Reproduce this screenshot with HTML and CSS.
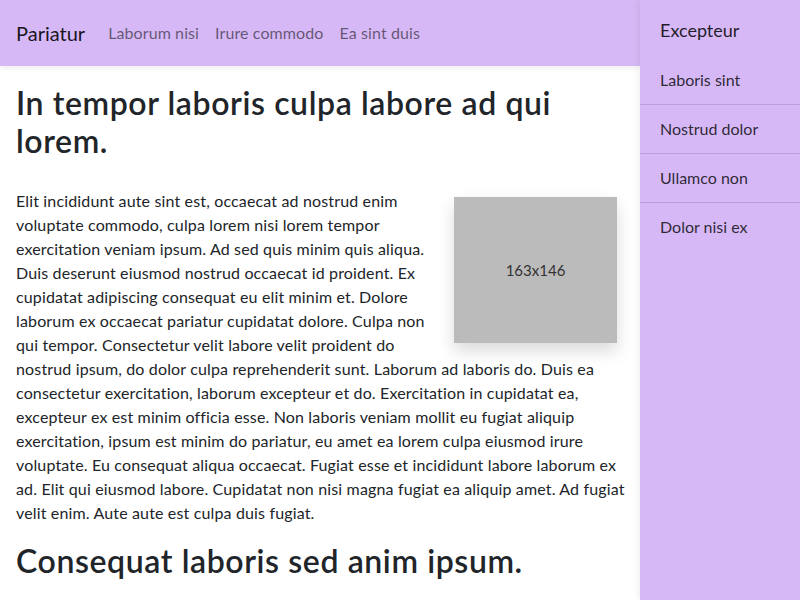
FILE: index.html
```html
<!DOCTYPE html>
<html>
<head>
<meta charset="utf-8">
<link rel="stylesheet" href="styles.css">
</head>
<body>
<div class="layout">
  <div class="main">
    <nav class="navbar">
      <span class="brand">Pariatur</span>
      <a class="nav-link">Laborum nisi</a>
      <a class="nav-link">Irure commodo</a>
      <a class="nav-link">Ea sint duis</a>
    </nav>
    <div class="content">
      <h1 class="title">In tempor laboris culpa labore ad qui lorem.</h1>
      <div class="placeholder">163x146</div>
      <p class="text">Elit incididunt aute sint est, occaecat ad nostrud enim voluptate commodo, culpa lorem nisi lorem tempor exercitation veniam ipsum. Ad sed quis minim quis aliqua. Duis deserunt eiusmod nostrud occaecat id proident. Ex cupidatat adipiscing consequat eu elit minim et. Dolore laborum ex occaecat pariatur cupidatat dolore. Culpa non qui tempor. Consectetur velit labore velit proident do nostrud ipsum, do dolor culpa reprehenderit sunt. Laborum ad laboris do. Duis ea consectetur exercitation, laborum excepteur et do. Exercitation in cupidatat ea, excepteur ex est minim officia esse. Non laboris veniam mollit eu fugiat aliquip exercitation, ipsum est minim do pariatur, eu amet ea lorem culpa eiusmod irure voluptate. Eu consequat aliqua occaecat. Fugiat esse et incididunt labore laborum ex ad. Elit qui eiusmod labore. Cupidatat non nisi magna fugiat ea aliquip amet. Ad fugiat velit enim. Aute aute est culpa duis fugiat.</p>
      <h2 class="title">Consequat laboris sed anim ipsum.</h2>
    </div>
  </div>
  <aside class="sidebar">
    <div class="side-head">Excepteur</div>
    <div class="side-item">Laboris sint</div>
    <div class="side-item">Nostrud dolor</div>
    <div class="side-item">Ullamco non</div>
    <div class="side-item last">Dolor nisi ex</div>
  </aside>
</div>
</body>
</html>
```

FILE: styles.css
```css
html, body {
  margin: 0;
  padding: 0;
  height: 100%;
  overflow: hidden;
}
body {
  font-family: Lato, "Noto Sans", sans-serif;
  font-size: 16px;
  line-height: 24px;
  color: #212529;
  background: #fff;
  font-variant-ligatures: none;
}
.layout {
  display: flex;
  height: 600px;
}
.main {
  width: 640px;
  flex: none;
  display: flex;
  flex-direction: column;
  overflow: hidden;
}
.navbar {
  height: 66px;
  flex: none;
  background: #d5b8f5;
  display: flex;
  align-items: center;
  padding: 0 16px;
  box-sizing: border-box;
  box-shadow: 0 2px 6px rgba(0,0,0,0.08);
  position: relative;
  z-index: 1;
}
.brand {
  font-size: 20px;
  color: rgba(0,0,0,0.9);
  margin-right: 15px;
}
.nav-link {
  font-size: 16px;
  color: rgba(0,0,0,0.55);
  padding: 0 8px;
  letter-spacing: 0.1px;
}
.content {
  padding: 18px 13px 0 16px;
}
.title {
  font-size: 32px;
  line-height: 38px;
  font-weight: 600;
  letter-spacing: 0.6px;
  margin: 0;
}
h1.title {
  margin-bottom: 29px;
}
.text {
  margin: 0 0 17px 0;
  letter-spacing: 0.15px;
}
.placeholder {
  float: right;
  width: 163px;
  height: 146px;
  margin: 8px 10px 8px 8px;
  background: #bbbbbb;
  color: #333;
  font-size: 15px;
  display: flex;
  align-items: center;
  justify-content: center;
  box-shadow: 0 8px 16px rgba(0,0,0,0.15);
}
.sidebar {
  width: 160px;
  flex: none;
  background: #d5b8f5;
  box-shadow: -2px 0 6px rgba(0,0,0,0.06);
  position: relative;
  z-index: 2;
}
.side-head {
  height: 56px;
  box-sizing: border-box;
  padding: 4px 20px 0 20px;
  display: flex;
  align-items: center;
  font-size: 18px;
  color: rgba(0,0,0,0.85);
}
.side-item {
  padding: 12px 20px;
  font-size: 16px;
  color: rgba(0,0,0,0.8);
  border-bottom: 1px solid #bb9fda;
}
.side-item.last {
  border-bottom: none;
}
```
